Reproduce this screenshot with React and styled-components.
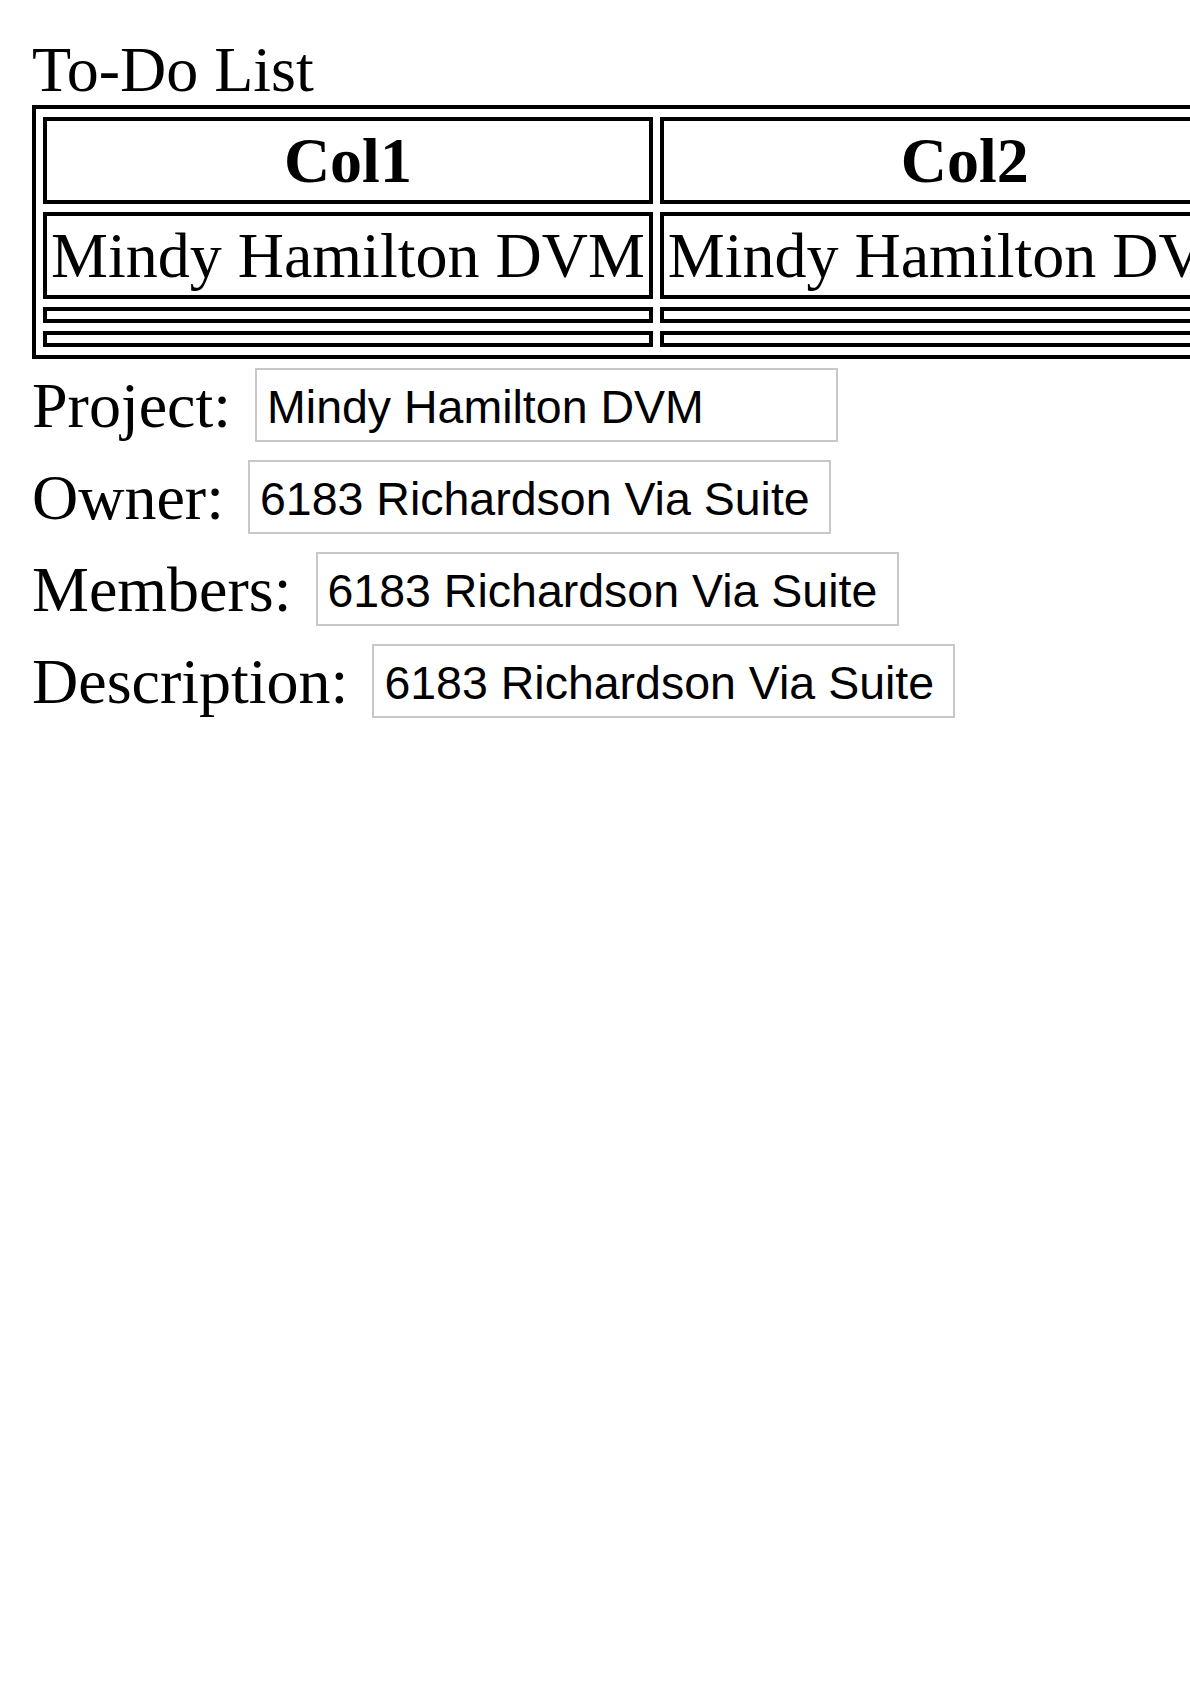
import styled, { createGlobalStyle } from "styled-components";

const Global = createGlobalStyle`
    html, body {
        margin: 0;
        background: #fff;
        overflow-x: hidden;
    }
`

const Pagina = styled.main`
    padding: 34px 0 0 32px;
    font-family: "Liberation Serif", "Times New Roman", serif;
    font-size: 64px;
    color: #000;
`

const Titulo = styled.div`
    line-height: 71px;
`

const Tabela = styled.table`
    border: 4px solid #000;
    border-spacing: 7px 8px;
    font-size: 64px;
    line-height: 71px;
`

const Cabecalho = styled.th`
    border: 4px solid #000;
    padding: 4px;
    font-weight: bold;
    text-align: center;
    white-space: nowrap;
`

const Celula = styled.td`
    border: 4px solid #000;
    padding: 4px;
    white-space: nowrap;
`

const Formulario = styled.form`
    display: flex;
    flex-direction: column;
    gap: 18px;
    margin-top: 9px;
`

const Linha = styled.label`
    display: flex;
    align-items: center;
    gap: 24px;
    line-height: 71px;
`

const Campo = styled.input`
    box-sizing: border-box;
    width: 583px;
    height: 74px;
    margin: 0;
    padding: 4px 10px 0;
    border: 2px solid #c8c8c8;
    border-radius: 0;
    font-family: "Liberation Sans", Arial, sans-serif;
    font-size: 46.5px;
    color: #000;
    outline: none;
`

const campos = [
    { rotulo: "Project:", valor: "Mindy Hamilton DVM" },
    { rotulo: "Owner:", valor: "6183 Richardson Via Suite" },
    { rotulo: "Members:", valor: "6183 Richardson Via Suite" },
    { rotulo: "Description:", valor: "6183 Richardson Via Suite" },
];

export default function App() {
    return (
        <Pagina>
            <Global />
            <Titulo>To-Do List</Titulo>
            <Tabela>
                <thead>
                    <tr>
                        <Cabecalho>Col1</Cabecalho>
                        <Cabecalho>Col2</Cabecalho>
                    </tr>
                </thead>
                <tbody>
                    <tr>
                        <Celula>Mindy Hamilton DVM</Celula>
                        <Celula>Mindy Hamilton DVM</Celula>
                    </tr>
                    <tr>
                        <Celula />
                        <Celula />
                    </tr>
                    <tr>
                        <Celula />
                        <Celula />
                    </tr>
                </tbody>
            </Tabela>
            <Formulario>
                {campos.map((c) => (
                    <Linha key={c.rotulo}>
                        {c.rotulo}
                        <Campo type="text" defaultValue={c.valor} readOnly />
                    </Linha>
                ))}
            </Formulario>
        </Pagina>
    )
}
